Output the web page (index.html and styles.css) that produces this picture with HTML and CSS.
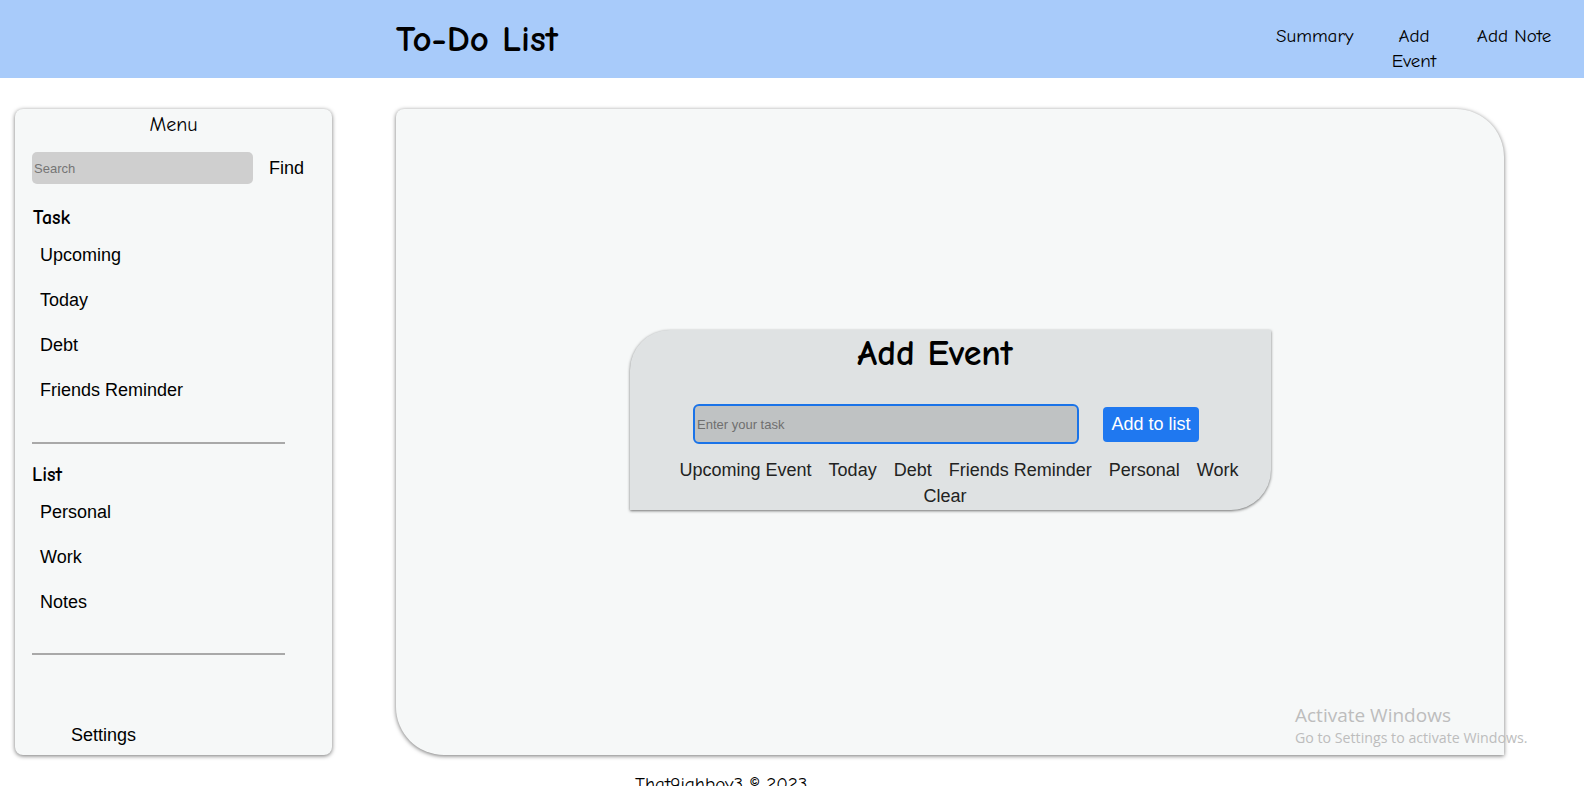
FILE: index.html
```html
<!DOCTYPE html>
<html>
<head>
<meta charset="utf-8">
<title>To-Do List</title>
<link rel="stylesheet" href="styles.css">
</head>
<body>
<header class="topbar">
  <h1 class="brand">To-Do List</h1>
  <nav class="topnav">
    <a class="navlink">Summary</a>
    <a class="navlink narrow">Add Event</a>
    <a class="navlink">Add Note</a>
  </nav>
</header>
<div class="layout">
  <aside class="sidebar">
    <div class="menu-title">Menu</div>
    <div class="search-row">
      <input class="search" type="text" placeholder="Search">
      <span class="find">Find</span>
    </div>
    <div class="group-title">Task</div>
    <ul class="items">
      <li>Upcoming</li>
      <li>Today</li>
      <li>Debt</li>
      <li>Friends Reminder</li>
    </ul>
    <hr class="sep">
    <div class="group-title list-title">List</div>
    <ul class="items">
      <li>Personal</li>
      <li>Work</li>
      <li>Notes</li>
    </ul>
    <hr class="sep sep-last">
    <div class="settings">Settings</div>
  </aside>
  <main class="main">
    <section class="card">
      <h2 class="card-title">Add Event</h2>
      <div class="entry-row">
        <input class="task-input" type="text" placeholder="Enter your task">
        <button class="add-btn">Add to list</button>
      </div>
      <div class="cats">
        <span>Upcoming Event</span><span>Today</span><span>Debt</span><span>Friends Reminder</span><span>Personal</span><span>Work</span>
      </div>
      <div class="clear">Clear</div>
    </section>
  </main>
</div>
<footer class="footer">That9ighboy3 © 2023</footer>
<div class="watermark">
  <div class="wm1">Activate Windows</div>
  <div class="wm2">Go to Settings to activate Windows.</div>
</div>
</body>
</html>
```
FILE: styles.css
```css
* { box-sizing: border-box; }
html, body { margin: 0; padding: 0; }
body {
  background: #ffffff;
  font-family: "Comic Sans MS", "Comic Neue", "Noto Sans", sans-serif;
  color: #000;
  height: 786px;
  overflow: hidden;
  position: relative;
}
.topbar {
  height: 78px;
  background: #a8cbfa;
  display: flex;
  align-items: flex-start;
  padding-left: 396px;
}
.brand {
  margin: 0;
  padding-top: 17px;
  font-size: 37px;
  font-weight: bold;
  line-height: 44px;
  flex: 1;
}
.topnav {
  display: flex;
  padding-top: 24px;
  padding-right: 20px;
}
.navlink {
  display: block;
  font-size: 19px;
  line-height: 25px;
  text-align: center;
  padding: 0 12px;
  width: 100px;
}
.navlink.narrow { padding: 0 20px; }
.layout {
  display: flex;
  align-items: flex-start;
  padding-top: 31px;
  padding-left: 15px;
  gap: 64px;
}
.sidebar {
  width: 317px;
  height: 646px;
  background: #f6f8f8;
  border-radius: 8px;
  box-shadow: 0 1px 4px rgba(0,0,0,0.55);
  padding: 4px 0 0 17px;
  display: flex;
  flex-direction: column;
}
.menu-title {
  text-align: center;
  font-size: 20px;
  line-height: 24px;
  padding-right: 17px;
}
.search-row {
  display: flex;
  align-items: center;
  margin-top: 15px;
  gap: 16px;
}
.search {
  width: 221px;
  height: 32px;
  border: none;
  border-radius: 5px;
  background: #cfcfcf;
  padding: 0 2px;
  font-family: "Liberation Sans", Arial, sans-serif;
  font-size: 13px;
  outline: none;
}
.search::placeholder { color: #757575; }
.find {
  font-family: "Liberation Sans", Arial, sans-serif;
  font-size: 18px;
}
.group-title {
  font-size: 20px;
  font-weight: bold;
  line-height: 26px;
  margin-top: 21px;
  padding-left: 1px;
}
.list-title { margin-top: 18px; padding-left: 0; }
.items {
  list-style: none;
  margin: 0;
  padding: 0 0 0 8px;
  font-family: "Liberation Sans", Arial, sans-serif;
  font-size: 18px;
}
.items li {
  line-height: 22px;
  margin-top: 23px;
}
.items li:first-child { margin-top: 13px; }
.sep {
  width: 253px;
  margin: 41px 0 0 0;
  border: none;
  border-top: 2px solid #a9a9a9;
  height: 0;
}
.sep-last { margin-top: 40px; }
.settings {
  margin-top: auto;
  margin-bottom: 9px;
  padding-left: 39px;
  font-family: "Liberation Sans", Arial, sans-serif;
  font-size: 18px;
}
.main {
  width: 1108px;
  height: 646px;
  background: #f6f8f8;
  border-radius: 8px 48px 0 48px;
  box-shadow: 0 1px 4px rgba(0,0,0,0.55);
  display: flex;
  justify-content: center;
  align-items: flex-start;
  padding-top: 221px;
}
.card {
  width: 641px;
  height: 180px;
  background: #dfe2e3;
  border-radius: 40px 0 40px 0;
  box-shadow: 0 1px 3px rgba(0,0,0,0.55);
  display: flex;
  flex-direction: column;
  align-items: center;
  padding-top: 2px;
  margin-left: 0;
}
.card-title {
  margin: 0;
  font-size: 36px;
  font-weight: bold;
  line-height: 44px;
  margin-left: -30px;
}
.entry-row {
  display: flex;
  align-items: center;
  gap: 24px;
  margin-top: 28px;
  margin-left: -8px;
}
.task-input {
  width: 386px;
  height: 40px;
  background: #bfc2c3;
  border: 2px solid #1a73e8;
  border-radius: 6px;
  padding: 0 2px;
  font-family: "Liberation Sans", Arial, sans-serif;
  font-size: 13px;
  outline: none;
}
.task-input::placeholder { color: #6f6f6f; }
.add-btn {
  width: 96px;
  height: 35px;
  background: #1f78f0;
  color: #fff;
  border: none;
  border-radius: 4px;
  font-family: "Liberation Sans", Arial, sans-serif;
  font-size: 18px;
  padding: 0;
}
.cats {
  display: flex;
  gap: 17px;
  margin-top: 13px;
  margin-left: 18px;
  font-family: "Liberation Sans", Arial, sans-serif;
  font-size: 18px;
  line-height: 26px;
  color: #222;
}
.clear {
  font-family: "Liberation Sans", Arial, sans-serif;
  font-size: 18px;
  line-height: 26px;
  color: #222;
  margin-left: -10px;
}
.footer {
  padding-left: 635px;
  margin-top: 17px;
  font-size: 19px;
  line-height: 24px;
}
.watermark {
  position: absolute;
  left: 1295px;
  top: 702px;
  color: #bdbdbd;
  font-family: "Open Sans", "Noto Sans", sans-serif;
  pointer-events: none;
}
.wm1 { font-size: 19px; line-height: 26px; }
.wm2 { font-size: 14.2px; line-height: 20px; }
```
